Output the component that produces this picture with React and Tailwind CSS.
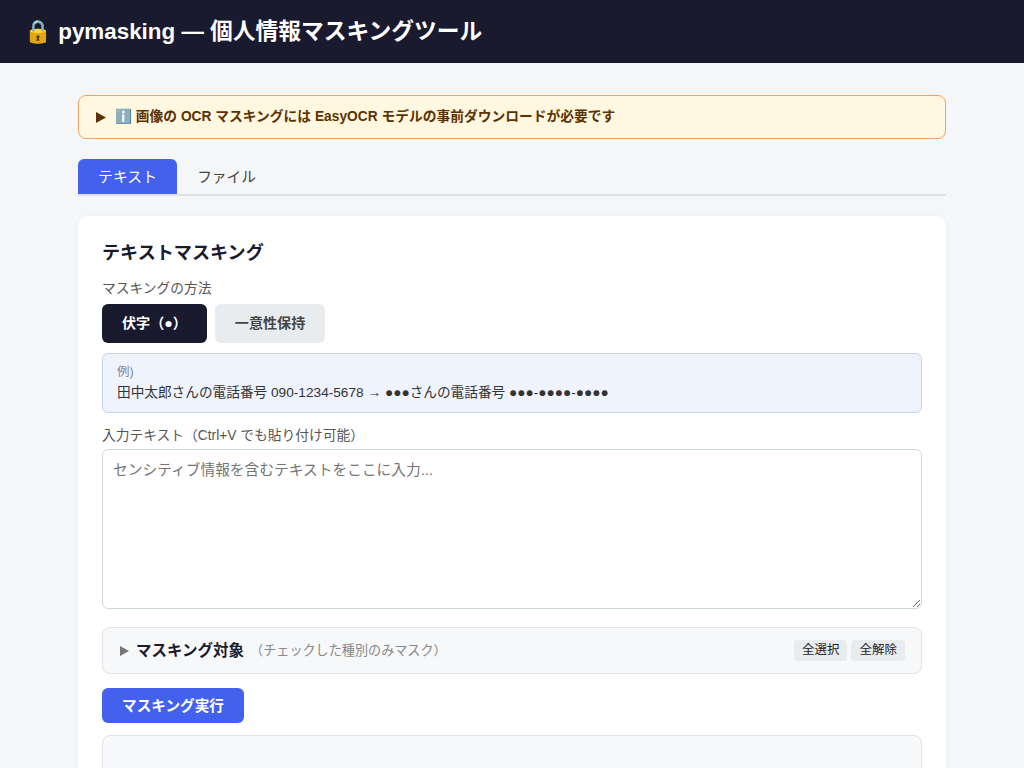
const FONT = "font-['Liberation_Sans','Noto_Sans_CJK_JP',sans-serif]"

function Triangle({ w, h, cls }) {
  return (
    <svg width={w} height={h} viewBox={`0 0 ${w} ${h}`} className={`shrink-0 ${cls}`}>
      <path d={`M0 0 L${w} ${h / 2} L0 ${h} Z`} fill="currentColor" />
    </svg>
  )
}

export default function App() {
  return (
    <div lang="ja" className={`min-h-screen bg-[#f5f6f8] text-[#1a1a2e] ${FONT}`}>
      {/* Header */}
      <header className="h-[63px] bg-[#1a1a2e] px-6 flex items-center">
        <h1 className="text-[22.4px] font-bold text-white">🔒 pymasking — <span className="text-[22.75px]">個人情報マスキングツール</span></h1>
      </header>

      <main className="max-w-[900px] mx-auto px-4 pt-8 pb-8">
        {/* Notice */}
        <div className="h-[44px] bg-[#fff7e0] border border-[#f4a261] rounded-lg pl-[17px] pr-4 flex items-center gap-[9px] text-[13.76px] font-bold text-[#5c3300]">
          <Triangle w={10} h={11} cls="text-[#5c3300]" />
          <span>ℹ️ 画像の OCR マスキングには EasyOCR モデルの事前ダウンロードが必要です</span>
        </div>

        {/* Tabs */}
        <div className="mt-5 flex border-b-2 border-[#dfe1e8] h-[37px]">
          <button className="h-[35px] px-5 pt-[2px] bg-[#4361ee] text-white text-[14.9px] rounded-t-md">テキスト</button>
          <button className="h-[35px] px-5 pt-[2px] text-[#444444] text-[14.72px] rounded-t-md">ファイル</button>
        </div>

        {/* Card */}
        <section className="mt-5 bg-white rounded-[10px] p-6 shadow-[0_1px_4px_rgba(0,0,0,0.05)]">
          <h2 className="text-[18.1px] font-bold leading-[26px] text-[#1a1a2e]">テキストマスキング</h2>

          <div className="mt-[13px] text-[13.76px] leading-[20px] text-[#555555]">マスキングの方法</div>
          <div className="mt-[5px] flex gap-2">
            <button className="h-[39px] px-5 rounded-md bg-[#1a1a2e] text-white text-[14.08px] font-bold">伏字（●）</button>
            <button className="h-[39px] px-5 rounded-md bg-[#e9ecef] text-[#444444] text-[14.08px] font-bold">一意性保持</button>
          </div>

          <div className="mt-[10px] h-[60px] bg-[#eff3fd] border border-[#c5d2f2] rounded-md px-[14px] pt-[9px]">
            <div className="text-[12.48px] leading-[18px] text-[#888888]">例)</div>
            <div className="text-[13.66px] leading-[23px] text-[#333333]">田中太郎さんの電話番号 090-1234-5678 → ●●●さんの電話番号 ●●●-●●●●-●●●●</div>
          </div>

          <label className="block mt-[13px] text-[13.76px] leading-[20px] text-[#555555]">入力テキスト（Ctrl+V でも貼り付け可能）</label>
          <textarea
            className="block mt-[3px] w-full h-[160px] border border-[#ced9de] rounded-md px-[10px] py-[10px] text-[14.72px] leading-[20px] bg-white outline-none placeholder:text-[#757575]"
            placeholder="センシティブ情報を含むテキストをここに入力..."
          />

          {/* Masking targets */}
          <div className="mt-[18px] h-[47px] bg-[#f7f8fa] border border-[#e0e3e8] rounded-lg pl-[17px] pr-4 flex items-center">
            <Triangle w={9} h={10} cls="text-[#777777]" />
            <span className="ml-[7px] text-[15.5px] font-bold text-[#1a1a2e]">マスキング対象</span>
            <span className="ml-[6px] text-[13.12px] font-normal text-[#888888]">（チェックした種別のみマスク）</span>
            <div className="ml-auto flex gap-1">
              <button className="h-[21px] px-2 rounded bg-[#e9ecef] text-[12.5px] text-[#222222]">全選択</button>
              <button className="h-[21px] px-2 rounded bg-[#e9ecef] text-[12.5px] text-[#222222]">全解除</button>
            </div>
          </div>

          <button className="block mt-[14px] h-[35px] px-5 pt-[2px] rounded-md bg-[#4361ee] text-white text-[14.64px] font-bold">マスキング実行</button>

          <div className="mt-3 h-[160px] bg-[#f8f9fa] border border-[#e0e3e8] rounded-lg" />
        </section>
      </main>
    </div>
  )
}
